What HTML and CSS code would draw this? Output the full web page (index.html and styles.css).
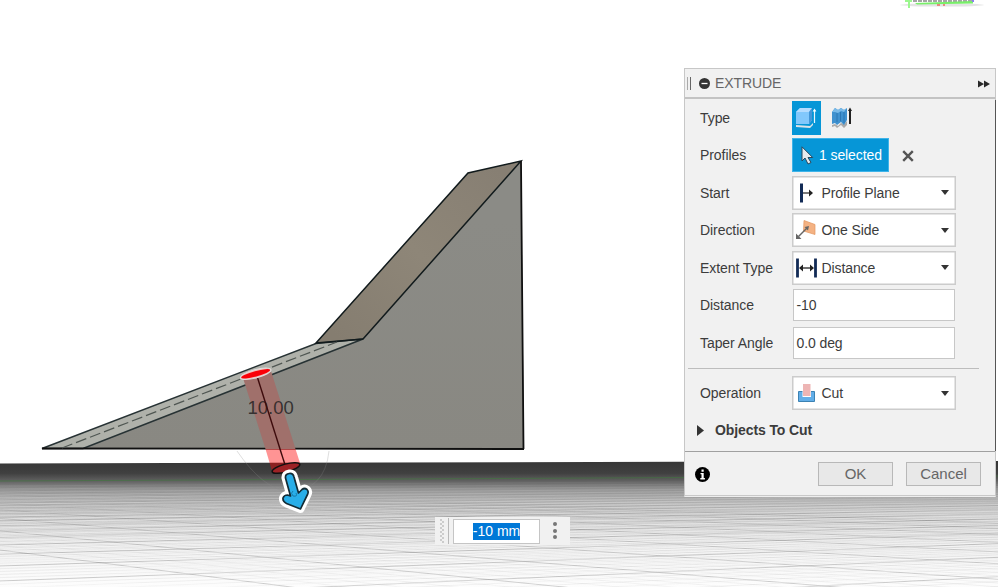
FILE: index.html
```html
<!DOCTYPE html>
<html lang="en">
<head>
<meta charset="utf-8">
<title>Extrude</title>
<link rel="stylesheet" href="styles.css">
</head>
<body>
<main class="workspace">
<svg class="scene" width="998" height="587" viewBox="0 0 998 587" role="img" aria-label="Model view">
  <defs>
    <linearGradient id="ground" x1="0" y1="462" x2="0" y2="587" gradientUnits="userSpaceOnUse">
      <stop offset="0" stop-color="#373737"/><stop offset=".09" stop-color="#404040"/>
      <stop offset=".15" stop-color="#606060"/><stop offset=".22" stop-color="#929292"/>
      <stop offset=".32" stop-color="#bababa"/><stop offset=".46" stop-color="#dadada"/>
      <stop offset=".64" stop-color="#eeeeee"/><stop offset="1" stop-color="#fdfdfd"/>
    </linearGradient>
    <linearGradient id="slope" x1="340" y1="340" x2="500" y2="170" gradientUnits="userSpaceOnUse">
      <stop offset="0" stop-color="#857d70"/><stop offset=".5" stop-color="#8e8678"/><stop offset="1" stop-color="#877f73"/>
    </linearGradient>
    <linearGradient id="face" x1="0" y1="220" x2="0" y2="450" gradientUnits="userSpaceOnUse">
      <stop offset="0" stop-color="#8b8b86"/><stop offset="1" stop-color="#898882"/>
    </linearGradient>
    <linearGradient id="fade" x1="0" y1="478" x2="0" y2="520" gradientUnits="userSpaceOnUse">
      <stop offset="0" stop-color="#000"/><stop offset="1" stop-color="#fff"/>
    </linearGradient>
    <mask id="depth" maskUnits="userSpaceOnUse" x="0" y="460" width="998" height="127"><path d="M0 460h998v127H0z" fill="url(#fade)"/></mask>
  </defs>
  <path d="M0 463.5L998 461V587H0z" fill="url(#ground)"/>
  <g id="grid" mask="url(#depth)" fill="none"></g>
  <path d="M0 481L998 476" stroke="#3f7a3d" stroke-width="1" opacity=".6"/>
  <ellipse cx="942" cy="5" rx="42" ry="1.6" fill="#e4e4e4"/>
  <path d="M913 1L972 1" stroke="#a5a5a5" stroke-width="2" stroke-dasharray="4 1"/>
  <path d="M909 0V8M905 1h7" stroke="#9cf78f" stroke-width="2"/>
  <path d="M915 3L973 1V3.5L917 4.5z" fill="#78ef69"/>
  <path d="M937 5h3m3 0h2" stroke="#e96b60" stroke-width="1.5"/>
  <path d="M973 0v2" stroke="#8a80ef" stroke-width="2"/>

  <path d="M83 448L363 339L521 161L524 449z" fill="url(#face)"/>
  <path d="M42 448.5L316 343.5L363 339L83 448.5z" fill="#afb1aa"/>
  <path d="M316 343L468 173L521 161L363 339z" fill="url(#slope)"/>
  <g fill="none" stroke="#111a1c" stroke-width="1.5">
    <path d="M42 448.5L316 343.5L363 339L83 448.5z" stroke="#273234"/>
    <path d="M316 343L468 173L521 161L363 339z"/>
    <path d="M521 161L523.5 449M42 448.5L524 449" stroke="#101010" stroke-width="1.8"/>
    <path d="M62 448L337 342" stroke="#4f5652" stroke-width="1.2" stroke-dasharray="11 4"/>
  </g>
  <path d="M237 451Q263 489 289 492Q325 490 329 451" fill="none" stroke="#888" opacity=".28"/>
  <path d="M243 378L265.5 449H295.5L271 371z" fill="#a0706b"/>
  <path d="M265.5 449L272 471Q290 472 300 463L295.5 449z" fill="#f00" fill-opacity=".42"/>
  <text class="dimension" x="247.5" y="413.5">10.00</text>
  <path d="M257 376L286 468" stroke="#3d0b0c" stroke-width="1.4"/>
  <ellipse cx="286" cy="468" rx="14.3" ry="4" transform="rotate(-15 286 468)" fill="#9d2225" stroke="#101010" stroke-width="1.5"/>
  <ellipse cx="255.7" cy="373.8" rx="15.8" ry="4.2" transform="rotate(-15 255.7 373.8)" fill="#f5c2bd" stroke="#ddd" stroke-width="1"/>
  <ellipse cx="255.7" cy="373.8" rx="15" ry="2.7" transform="rotate(-15 255.7 373.8)" fill="#fa0008"/>
  <path d="M285.5 478Q285 474 289.3 473.5Q293 473 294 477L298.5 493L302 489.5Q304.5 487.5 307 489.5Q309 491.5 307.5 494.5L300.5 509L286.5 503.5Q282.5 501.5 283 498Q284 495 287.5 495L290.5 496z" fill="#fff" stroke="#fff" stroke-width="8" stroke-linejoin="round"/>
  <path d="M285.5 478Q285 474 289.3 473.5Q293 473 294 477L298.5 493L302 489.5Q304.5 487.5 307 489.5Q309 491.5 307.5 494.5L300.5 509L286.5 503.5Q282.5 501.5 283 498Q284 495 287.5 495L290.5 496z" fill="#29aee8" stroke="#132c36" stroke-width="1.7" stroke-linejoin="round"/>
  <path d="M293 491q-3 2 0 5q5 1 3-3" fill="none" stroke="#167aa8" stroke-width="1"/>
</svg>

<section class="value-bar">
  <span class="grip"></span><span class="rule"></span>
  <div class="value"><span>-10 mm</span></div>
  <span class="more"><i></i><i></i><i></i></span>
</section>

<section class="panel">
  <header class="head">
    <span class="handle"></span>
    <svg width="11" height="11" viewBox="0 0 11 11"><circle cx="5.5" cy="5.5" r="5.5" fill="#333"/><path d="M2.5 5.5h6" stroke="#fff" stroke-width="1.3"/></svg>
    <h1>EXTRUDE</h1>
    <svg class="expand" width="12" height="8" viewBox="0 0 12 8"><path d="M0 .5L6 4L0 7.5zM6 .5L12 4L6 7.5z" fill="#282828"/></svg>
  </header>
  <div class="body">
    <div class="row"><span class="label">Type</span>
      <button class="type on"><svg width="23" height="24" viewBox="0 0 23 24">
        <path d="M1 19l14 1 3-3v2l-3 3L1 21z" fill="#dde3e7"/><path d="M1 6l4-4h12v12l-3 4H1z" fill="#82c8fc"/><path d="M1 6l4-4h12l-3 4z" fill="#b4dcff"/><path d="M14 6l3-4v12l-3 4z" fill="#4496d8"/><path d="M19.5 17V4" stroke="#e8f7ff" stroke-width="1.2"/><path d="M17.6 5.5l1.9-3 1.9 3z" fill="#fff"/></svg></button>
      <button class="type alt"><svg width="23" height="24" viewBox="0 0 23 24">
        <path d="M0 19l3-1 3 2 3-3 3 1 3-3v4l-3 3-3-3-4 3-2-2-3 1z" fill="#aaa"/><path d="M0 6l3-4 3 2 3-2 3 2 3-2v12l-3 5-3-3-4 3-2-2-3 1z" fill="#3f91cf"/><path d="M0 6l3-4 3 2 3-2 3 2 3-2-3 4-3-1-3 2-3-1z" fill="#78b9e8"/><path d="M5 7v9M8.500 6v9M12 6v11" stroke="#2b77b4"/><path d="M18 18V4" stroke="#222" stroke-width="2"/><path d="M16 5L18 1.5 20 5z" fill="#222"/></svg></button>
    </div>
    <div class="row"><span class="label">Profiles</span>
      <button class="selected"><svg width="13" height="19" viewBox="0 0 13 19"><path d="M1 .8V15l3-3 3 6 3-1.5-3-5h4.7z" fill="#e5eaee" stroke="#29465b" stroke-width="1"/></svg><span>1 selected</span></button>
      <svg class="clear" width="12" height="12" viewBox="0 0 12 12"><path d="M1.2 1.2l9.6 9.6M10.8 1.2L1.2 10.8" stroke="#555" stroke-width="2.4"/></svg>
    </div>
    <div class="row"><span class="label">Start</span><div class="select">
      <svg class="icon" width="22" height="22" viewBox="0 0 22 22"><path d="M5.500 1.5v19" stroke="#122b56" stroke-width="3"/><path d="M7 11h8" stroke="#222" stroke-width="1.2"/><path d="M13 7.5l4 3.5-4 3.5z" fill="#222"/></svg><span>Profile Plane</span><b class="caret"></b></div></div>
    <div class="row"><span class="label">Direction</span><div class="select">
      <svg class="icon" width="22" height="22" viewBox="0 0 22 22"><path d="M8 1.5l11 4v10L7.5 12z" fill="#f4b283" stroke="#e3955e" stroke-width=".7"/><path d="M11 9L2.5 17.5" stroke="#666" stroke-width="1.4"/><path d="M0 20v-5.5l1.5 1.5 2.5 2.5 1.5 1.5zM13 7l-1 4.5-3.5-3.5z" fill="#666"/></svg><span>One Side</span><b class="caret"></b></div></div>
    <div class="row"><span class="label">Extent Type</span><div class="select">
      <svg class="icon" width="22" height="22" viewBox="0 0 22 22"><path d="M1.5 1.5v19M19.5 1.5v19" stroke="#122b56" stroke-width="2.8"/><path d="M4 11h13" stroke="#222" stroke-width="1.3"/><path d="M7 7.5L3 11l4 3.5zM14 7.5l4 3.5-4 3.5z" fill="#222"/></svg><span>Distance</span><b class="caret"></b></div></div>
    <div class="row"><span class="label">Distance</span><div class="input">-10</div></div>
    <div class="row"><span class="label">Taper Angle</span><div class="input">0.0 deg</div></div>
    <div class="separator"></div>
    <div class="row"><span class="label">Operation</span><div class="select">
      <svg class="icon" width="22" height="22" viewBox="0 0 22 22"><path d="M2.5 9.5h5v5h7v-5h4v10h-16z" fill="#62aee8" stroke="#3c82b3"/><path d="M6.500 2h8.5v13H6.500z" fill="#fff"/><path d="M7 2h7.5v12H7z" fill="#edb5b4"/></svg><span>Cut</span><b class="caret"></b></div></div>
    <div class="objects"><svg width="7" height="11" viewBox="0 0 7 11"><path d="M0 0l7 5.5L0 11z" fill="#333"/></svg><strong>Objects To Cut</strong></div>
  </div>
  <footer class="foot">
    <svg class="info" width="15" height="15" viewBox="0 0 15 15"><circle cx="7.5" cy="7.5" r="7.5" fill="#000"/><path d="M6.5 2.5h2.2v2.2H6.5zM5.5 6h3.2v5h1.2v1.5H5.3V11h1.2V7.3h-1z" fill="#fff"/></svg>
    <button class="action">OK</button><button class="action">Cancel</button>
  </footer>
</section>
</main>
<script src="grid.js"></script>
</body>
</html>
```
FILE: styles.css
```css
* { box-sizing: border-box; }
body { margin: 0; overflow: hidden; background: #fff; font-family: "Liberation Sans", Arial, sans-serif; font-size: 14px; color: #3c3c3c; }
button { font: inherit; margin: 0; padding: 0; border: 0; }
svg { flex: none; display: block; }
.workspace { position: relative; width: 998px; height: 587px; }
.dimension { font-size: 18.5px; fill: #262323; fill-opacity: .85; }
.value-bar { position: absolute; left: 435px; top: 517px; width: 135px; height: 28px; background: #f1f1f1; display: flex; align-items: center; }
.grip { width: 4px; height: 24px; margin-left: 5px; background: radial-gradient(circle at 1px 1px, #ccc .8px, transparent 1.2px) 0 0 / 4px 4px, radial-gradient(circle at 3px 3px, #ccc .8px, transparent 1.2px) 0 0 / 4px 4px; }
.rule { width: 1px; height: 26px; margin-left: 4px; background: #b9b9b9; }
.value { width: 87px; height: 25px; margin-left: 4px; border: 1px solid #c5c5c5; background: #fff; display: flex; align-items: center; justify-content: center; }
.value span { background: #0078d7; color: #fff; height: 17px; line-height: 17px; font-size: 14px; white-space: nowrap; }
.more { display: flex; flex-direction: column; gap: 2.3px; margin: -1px 0 0 13px; }
.more i { width: 4px; height: 4px; border-radius: 50%; background: #777; }
.panel { position: absolute; left: 684px; top: 68px; width: 312px; height: 429px; border: 1px solid #c7c7c7; border-bottom-color: #eee; background: #f1f1f1; box-shadow: inset 0 -1px #c9c9c9; display: flex; flex-direction: column; }
.head { height: 30px; flex: none; display: flex; align-items: center; padding: 0 5px 0 2px; border-bottom: 2px solid #c3c3c3; }
.handle { width: 4px; height: 13px; border: solid #aaa; border-width: 0 1px; border-right-color: #666; margin-right: 8px; }
.head h1 { margin: 0 0 0 5px; font-size: 14px; line-height: 18px; font-weight: 400; color: #666; letter-spacing: -.1px; }
.expand { margin-left: auto; margin-top: 2px; }
.body { height: 353px; flex: none; padding: 0 0 0 15px; border-bottom: 1px solid #a0a0a0; box-shadow: 2px 0 0 -1px #555; }
.row { height: 37.5px; display: flex; align-items: center; }
.label { width: 92px; flex: none; white-space: nowrap; letter-spacing: -.07px; }
.type { width: 29px; height: 34px; display: flex; align-items: center; justify-content: center; background: transparent; }
.type.on { background: #0696d7; }
.alt { margin-left: 8px; }
.selected { width: 97px; height: 34px; display: flex; align-items: center; background: #0696d7; border: 1px solid #3eb4e9; color: #fff; padding-left: 8px; }
.selected span { margin-left: 5px; white-space: nowrap; letter-spacing: -.1px; }
.clear { margin-left: 13px; margin-top: 1px; }
.select { width: 164px; height: 34px; border: 1px solid #ccc; box-shadow: inset 0 0 0 .5px #ccc; background: #fff; display: flex; align-items: center; padding: 0 6px 0 3px; white-space: nowrap; }
.select span { letter-spacing: -.1px; }
.icon { margin-right: 3.5px; }
.caret { margin-left: auto; border: solid transparent; border-width: 5px 4px 0; border-top-color: #333; }
.input { width: 162px; height: 32px; margin-left: 1px; border: 1px solid #c7c7c7; background: #fff; padding-left: 2.5px; line-height: 30px; letter-spacing: -.1px; }
.separator { height: 1px; width: 291px; margin: 6.5px 0 5.5px -12px; background: #bdbdbd; }
.objects { height: 36.5px; display: flex; align-items: center; margin-left: -3px; }
.objects strong { margin-left: 11px; letter-spacing: -.1px; }
.foot { height: 45px; flex: none; display: flex; align-items: center; padding: 0 14px 2px 10px; }
.info { margin-top: 2px; }
.action { width: 75px; height: 24px; margin-left: 13px; border: 1px solid #b8b8b8; background: #e8e8e8; color: #666; font-size: 15px; line-height: 21px; }
.foot svg + .action { margin-left: auto; }
```
FILE: grid.js
```javascript
const grid = document.getElementById('grid');
function line(y1, y2, color, opacity, width) {
  const el = document.createElementNS('http://www.w3.org/2000/svg', 'path');
  el.setAttribute('d', `M0 ${y1}L998 ${y2}`);
  el.setAttribute('stroke', color);
  el.setAttribute('stroke-opacity', opacity);
  el.setAttribute('stroke-width', width);
  grid.append(el);
}
function fan(x, y, start, step, count) {
  for (let i = 0; i < count; i++) {
    const distance = start / (1 + i * step);
    const first = y + distance;
    const last = y + distance * (998 - x) / -x;
    const major = i % 5 === 0;
    line(first, last, major ? '#727272' : '#aaa', major ? .4 : .2, major ? .9 : .7);
  }
}
fan(-700, 461, 89, .055, 50);
fan(3200, 461, 210, .05, 90);
for (let y = 486; y < 620; y += 3) {
  line(y, y - (y - 461) * .25, '#fff', .4, 1);
}
```
